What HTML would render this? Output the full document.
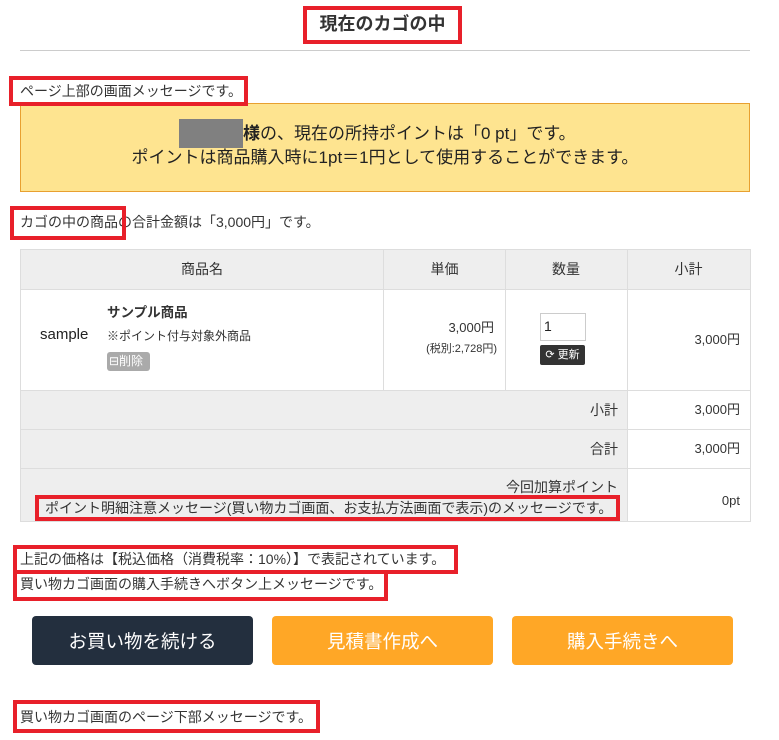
<!DOCTYPE html>
<html><head><meta charset="utf-8"><style>
*{margin:0;padding:0;box-sizing:border-box}
body{width:779px;height:740px;background:#fff;font-family:"Liberation Sans","Noto Sans CJK JP",sans-serif;color:#333;position:relative;overflow:hidden;font-size:14px}
.a{position:absolute}
.rb{position:absolute;border:4px solid #e8202a}
.t{position:absolute;white-space:nowrap;line-height:1}
.btn{position:absolute;top:616px;height:49px;width:221px;border-radius:4px;color:#fff;font-size:18.5px;display:flex;align-items:center;justify-content:center}
</style></head><body>
<div class="rb" style="left:303px;top:6px;width:159px;height:38px"></div>
<div class="t" style="left:303px;width:159px;top:15px;text-align:center;font-size:18px;font-weight:bold">現在のカゴの中</div>
<div class="a" style="left:20px;top:50px;width:730px;height:1px;background:#ccc"></div>

<div class="a" style="left:20px;top:103px;width:730px;height:89px;background:#fee490;border:1px solid #e8a030"></div>
<div class="a" style="left:179px;top:119px;width:64px;height:29px;background:#808080"></div>
<div class="t" style="left:243px;top:125px;font-size:17px;color:#222"><b>様</b>の、現在の所持ポイントは「0 pt」です。</div>
<div class="t" style="left:20px;width:730px;text-align:center;top:149px;font-size:17px;color:#222">ポイントは商品購入時に1pt＝1円として使用することができます。</div>
<div class="rb" style="left:9px;top:76px;width:239px;height:30px"></div>
<div class="t" style="left:20px;top:84px">ページ上部の画面メッセージです。</div>

<div class="t" style="left:20px;top:215px">カゴの中の商品の合計金額は「3,000円」です。</div>
<div class="rb" style="left:10px;top:206px;width:116px;height:34px"></div>

<div class="a" style="left:20px;top:249px;width:730px;height:41px;background:#eee"></div>
<div class="a" style="left:20px;top:390px;width:607px;height:131px;background:#eee"></div>
<div class="a" style="left:20px;top:249px;width:731px;height:273px;border:1px solid #ddd"></div>
<div class="a" style="left:20px;top:289px;width:730px;height:1px;background:#ddd"></div>
<div class="a" style="left:20px;top:390px;width:730px;height:1px;background:#ddd"></div>
<div class="a" style="left:20px;top:429px;width:730px;height:1px;background:#ddd"></div>
<div class="a" style="left:20px;top:468px;width:730px;height:1px;background:#ddd"></div>
<div class="a" style="left:383px;top:249px;width:1px;height:141px;background:#ddd"></div>
<div class="a" style="left:505px;top:249px;width:1px;height:141px;background:#ddd"></div>
<div class="a" style="left:627px;top:249px;width:1px;height:273px;background:#ddd"></div>
<div class="t" style="left:20px;width:364px;text-align:center;top:262px;font-size:14px">商品名</div>
<div class="t" style="left:384px;width:121px;text-align:center;top:262px;font-size:14px">単価</div>
<div class="t" style="left:505px;width:122px;text-align:center;top:262px;font-size:14px">数量</div>
<div class="t" style="left:627px;width:123px;text-align:center;top:262px;font-size:14px">小計</div>
<div class="t" style="left:40px;top:327px;font-size:15px;color:#222">sample</div>
<div class="t" style="left:107px;top:306px;font-weight:bold;font-size:13.5px">サンプル商品</div>
<div class="t" style="left:107px;top:330px;font-size:12px">※ポイント付与対象外商品</div>
<div class="a" style="left:107px;top:352px;width:43px;height:19px;background:#aaa;border-radius:3px;color:#fff;font-size:12px;line-height:19px;padding-left:2px">&#8863;削除</div>
<div class="t" style="left:384px;width:110px;text-align:right;top:321px;font-size:13px">3,000円</div>
<div class="t" style="left:384px;width:113px;text-align:right;top:344px;font-size:11px">(税別:2,728円)</div>
<div class="a" style="left:540px;top:313px;width:46px;height:28px;border:1px solid #ccc;padding:4px 3px;font-size:14px;color:#222">1</div>
<div class="a" style="left:540px;top:345px;width:45px;height:20px;background:#333;border-radius:2px;color:#fff;font-size:11px;line-height:20px;text-align:center">&#10227; 更新</div>
<div class="t" style="left:627px;width:113px;text-align:right;top:333px;font-size:13px">3,000円</div>
<div class="t" style="left:20px;width:598px;text-align:right;top:403px">小計</div>
<div class="t" style="left:627px;width:113px;text-align:right;top:403px;font-size:13px">3,000円</div>
<div class="t" style="left:20px;width:598px;text-align:right;top:442px">合計</div>
<div class="t" style="left:627px;width:113px;text-align:right;top:442px;font-size:13px">3,000円</div>
<div class="t" style="left:20px;width:598px;text-align:right;top:480px">今回加算ポイント</div>
<div class="t" style="left:627px;width:113px;text-align:right;top:494px;font-size:13px">0pt</div>
<div class="rb" style="left:35px;top:495px;width:585px;height:26px"></div>
<div class="t" style="left:45px;top:501px;font-size:14px">ポイント明細注意メッセージ(買い物カゴ画面、お支払方法画面で表示)のメッセージです。</div>

<div class="rb" style="left:13px;top:545px;width:445px;height:29px"></div>
<div class="t" style="left:20px;top:552px">上記の価格は【税込価格（消費税率：10%）】で表記されています。</div>
<div class="rb" style="left:13px;top:570px;width:375px;height:31px"></div>
<div class="t" style="left:20px;top:577px">買い物カゴ画面の購入手続きへボタン上メッセージです。</div>

<div class="btn" style="left:32px;background:#232f3e">お買い物を続ける</div>
<div class="btn" style="left:272px;background:#ffa726">見積書作成へ</div>
<div class="btn" style="left:512px;background:#ffa726">購入手続きへ</div>

<div class="rb" style="left:13px;top:700px;width:307px;height:33px"></div>
<div class="t" style="left:20px;top:710px">買い物カゴ画面のページ下部メッセージです。</div>
</body></html>
